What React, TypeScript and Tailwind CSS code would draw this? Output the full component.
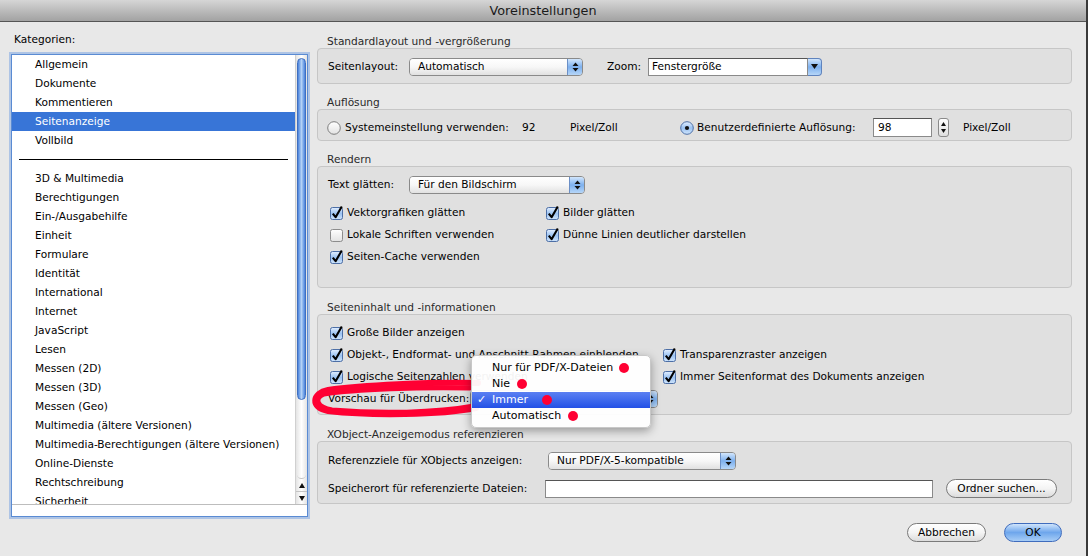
import React from 'react';

const TOP_ITEMS = ['Allgemein', 'Dokumente', 'Kommentieren', 'Seitenanzeige', 'Vollbild'];
const MORE_ITEMS = [
  '3D & Multimedia',
  'Berechtigungen',
  'Ein-/Ausgabehilfe',
  'Einheit',
  'Formulare',
  'Identität',
  'International',
  'Internet',
  'JavaScript',
  'Lesen',
  'Messen (2D)',
  'Messen (3D)',
  'Messen (Geo)',
  'Multimedia (ältere Versionen)',
  'Multimedia-Berechtigungen (ältere Versionen)',
  'Online-Dienste',
  'Rechtschreibung',
  'Sicherheit',
];

const MENU_ITEMS = ['Nur für PDF/X-Dateien', 'Nie', 'Immer', 'Automatisch'];

// shared gradients for the aqua controls
const Defs = () => (
  <svg width="0" height="0" className="absolute">
    <defs>
      <linearGradient id="cbOn" x1="0" y1="0" x2="0" y2="1">
        <stop offset="0" stopColor="#e3efff" />
        <stop offset="0.5" stopColor="#9cc3f2" />
        <stop offset="1" stopColor="#cfe4fb" />
      </linearGradient>
      <linearGradient id="cbOff" x1="0" y1="0" x2="0" y2="1">
        <stop offset="0" stopColor="#ffffff" />
        <stop offset="1" stopColor="#e2e2e2" />
      </linearGradient>
    </defs>
  </svg>
);

const PopupArrows = () => (
  <svg width="7" height="10" viewBox="0 0 7 10">
    <path d="M3.5 0.5 L6.5 4 H0.5Z M3.5 9.5 L6.5 6 H0.5Z" fill="#111" />
  </svg>
);

const Select = ({ value, className }: { value: string; className: string }) => (
  <div className={`flex h-[18px] items-stretch rounded-[4px] border border-[#8a8a8a] overflow-hidden ${className}`}>
    <div className="flex-1 flex items-center pl-[8px] bg-gradient-to-b from-white via-[#f7f7f7] to-[#e1e1e1] whitespace-nowrap overflow-hidden">
      {value}
    </div>
    <div className="w-[15px] flex items-center justify-center border-l border-[#6b8fc6] bg-gradient-to-b from-[#d2e6fc] via-[#7db0ee] to-[#b6d6f8]">
      <PopupArrows />
    </div>
  </div>
);

const Check = ({ on }: { on?: boolean }) => (
  <svg width="14" height="14" viewBox="0 0 14 14" className="shrink-0 overflow-visible">
    <rect
      x="0.5"
      y="1.5"
      width="12"
      height="12"
      rx="2"
      fill={on ? 'url(#cbOn)' : 'url(#cbOff)'}
      stroke={on ? '#4d6fa6' : '#8c8c8c'}
    />
    {on && <path d="M2.8 7.6 L5.6 11.2 L11.8 0.4" stroke="#000" strokeWidth="2.1" fill="none" strokeLinejoin="round" />}
  </svg>
);

const CheckItem = ({ on, label }: { on?: boolean; label: string }) => (
  <div className="flex items-center h-[22px] gap-[3px] whitespace-nowrap">
    <Check on={on} />
    <span>{label}</span>
  </div>
);

const Radio = ({ on }: { on?: boolean }) => (
  <svg width="14" height="14" viewBox="0 0 14 14" className="shrink-0">
    <circle cx="7" cy="7" r="6.3" fill={on ? 'url(#cbOn)' : 'url(#cbOff)'} stroke={on ? '#4d6fa6' : '#7e7e7e'} />
    {on && <circle cx="7" cy="7" r="2.1" fill="#111" />}
  </svg>
);

const Group = ({ title, className, children }: { title: string; className: string; children: React.ReactNode }) => (
  <div className={className}>
    <div className="h-[14px] leading-[14px] pl-[10px] text-[#2a2a2a]">{title}</div>
    {children}
  </div>
);

const Button = ({ label, primary, className }: { label: string; primary?: boolean; className: string }) => (
  <div
    className={`h-[19px] flex items-center justify-center rounded-full border ${
      primary
        ? 'border-[#3f6cbd] bg-gradient-to-b from-[#cfe4fb] via-[#6ea6ec] to-[#a7cdf6]'
        : 'border-[#7a7a7a] bg-gradient-to-b from-white via-[#f4f4f4] to-[#dcdcdc]'
    } ${className}`}
  >
    {label}
  </div>
);

export default function App() {
  return (
    <div className="relative w-[1088px] h-[556px] overflow-hidden bg-[#e8e8e8] text-[10.6px] text-black font-['DejaVu_Sans','Noto_Sans',sans-serif] border-r-2 border-[#3a3a3a] flex flex-col">
      <Defs />
      {/* title bar */}
      <div className="h-[22px] shrink-0 flex items-center justify-center bg-gradient-to-b from-[#d6d6d6] to-[#a2a2a2] border-b border-[#555] text-[12.8px] text-[#1a1a1a]">
        Voreinstellungen
      </div>

      <div className="flex flex-1 min-h-0">
        {/* categories */}
        <div className="w-[297px] ml-[11px] shrink-0 flex flex-col">
          <div className="mt-[11px] h-[13px] leading-[13px] pl-[3px]">Kategorien:</div>
          <div className="mt-[8px] h-[463px] border border-[#5a8bd3] shadow-[0_0_0_2px_rgba(125,165,225,0.55)] bg-white flex flex-col overflow-hidden">
            <div className="flex flex-1 min-h-0">
              <div className="flex-1 overflow-hidden">
                {TOP_ITEMS.map((item) => (
                  <div
                    key={item}
                    className={`h-[19px] leading-[19px] pl-[23px] whitespace-nowrap ${
                      item === 'Seitenanzeige' ? 'bg-[#3875d7] text-white' : ''
                    }`}
                  >
                    {item}
                  </div>
                ))}
                <div className="h-[19px] flex items-center">
                  <div className="ml-[7px] w-[269px] h-px bg-black" />
                </div>
                {MORE_ITEMS.map((item) => (
                  <div key={item} className="h-[19px] leading-[19px] pl-[23px] whitespace-nowrap">
                    {item}
                  </div>
                ))}
              </div>
              {/* scrollbar */}
              <div className="w-[12px] shrink-0 flex flex-col bg-gradient-to-r from-[#e4e4e4] via-white to-[#e4e4e4] border-l border-[#d0d0d0]">
                <div className="mt-[3px] mx-[1px] h-[342px] rounded-full border border-[#3f6fc0] bg-gradient-to-r from-[#4a82db] via-[#b4d2f6] to-[#4a82db]" />
                <div className="flex-1 mx-[1px] rounded-b-full border-b border-[#c4c4c4]" />
                <div className="h-[13px] flex items-center justify-center border-b border-[#c4c4c4]">
                  <svg width="6" height="5" viewBox="0 0 6 5"><path d="M3 0 L6 5 H0Z" fill="#111" /></svg>
                </div>
                <div className="h-[12px] flex items-center justify-center">
                  <svg width="6" height="5" viewBox="0 0 6 5"><path d="M3 5 L6 0 H0Z" fill="#111" /></svg>
                </div>
              </div>
            </div>
            <div className="h-[12px] shrink-0 border-t border-[#bdbdbd] bg-white" />
          </div>
        </div>

        {/* settings */}
        <div className="ml-[9px] w-[755px] flex flex-col">
          <Group title="Standardlayout und -vergrößerung" className="mt-[12px]">
            <div className="h-[36px] rounded-[4px] border border-[#c6c6c6] bg-[#e0e0e0] flex items-center pl-[10px] pt-[1px]">
              <span className="w-[81px]">Seitenlayout:</span>
              <Select value="Automatisch" className="w-[174px]" />
              <span className="ml-[24px] w-[41px]">Zoom:</span>
              <div className="flex h-[18px]">
                <div className="w-[160px] bg-white border border-[#8a8a8a] border-t-[#555] flex items-center pl-[3px]">Fenstergröße</div>
                <div className="w-[14px] rounded-r-[4px] border border-l-0 border-[#5f83bd] bg-gradient-to-b from-[#d2e6fc] via-[#7db0ee] to-[#b6d6f8] flex items-center justify-center">
                  <svg width="7" height="5" viewBox="0 0 7 5"><path d="M3.5 5 L7 0 H0Z" fill="#111" /></svg>
                </div>
              </div>
            </div>
          </Group>

          <Group title="Auflösung" className="mt-[11px]">
            <div className="h-[32px] rounded-[4px] border border-[#c6c6c6] bg-[#e0e0e0] flex items-center pl-[9px] pt-[5px]">
              <Radio />
              <span className="ml-[4px] w-[177px]">Systemeinstellung verwenden:</span>
              <span className="w-[48px]">92</span>
              <span className="w-[110px]">Pixel/Zoll</span>
              <Radio on />
              <span className="ml-[3px] w-[176px]">Benutzerdefinierte Auflösung:</span>
              <div className="w-[59px] h-[19px] bg-white border border-[#8a8a8a] border-t-[#555] flex items-center pl-[4px]">98</div>
              <div className="ml-[6px] w-[11px] h-[19px] rounded-[3px] border border-[#8a8a8a] bg-gradient-to-b from-white to-[#dedede] flex flex-col items-center justify-center gap-[3px]">
                <svg width="5" height="4" viewBox="0 0 5 4"><path d="M2.5 0 L5 4 H0Z" fill="#111" /></svg>
                <svg width="5" height="4" viewBox="0 0 5 4"><path d="M2.5 4 L5 0 H0Z" fill="#111" /></svg>
              </div>
              <span className="ml-[14px]">Pixel/Zoll</span>
            </div>
          </Group>

          <Group title="Rendern" className="mt-[11px]">
            <div className="h-[122px] rounded-[4px] border border-[#c6c6c6] bg-[#e0e0e0] pl-[10px] pt-[9px]">
              <div className="flex items-center h-[18px]">
                <span className="w-[81px]">Text glätten:</span>
                <Select value="Für den Bildschirm" className="w-[176px]" />
              </div>
              <div className="mt-[8px] ml-[2px] grid grid-cols-[216px_1fr]">
                <CheckItem on label="Vektorgrafiken glätten" />
                <CheckItem on label="Bilder glätten" />
                <CheckItem label="Lokale Schriften verwenden" />
                <CheckItem on label="Dünne Linien deutlicher darstellen" />
                <CheckItem on label="Seiten-Cache verwenden" />
              </div>
            </div>
          </Group>

          <Group title="Seiteninhalt und -informationen" className="mt-[12px]">
            <div className="h-[101px] rounded-[4px] border border-[#c6c6c6] bg-[#e0e0e0] pl-[12px] pt-[7px]">
              <div className="grid grid-cols-[333px_1fr]">
                <CheckItem on label="Große Bilder anzeigen" />
                <div />
                <CheckItem on label="Objekt-, Endformat- und Anschnitt-Rahmen einblenden" />
                <CheckItem on label="Transparenzraster anzeigen" />
                <CheckItem on label="Logische Seitenzahlen verwenden" />
                <CheckItem on label="Immer Seitenformat des Dokuments anzeigen" />
                <div className="flex items-center h-[22px] -ml-[2px]">
                  <span className="w-[142px] whitespace-nowrap">Vorschau für Überdrucken:</span>
                  <Select value="Immer" className="w-[188px]" />
                </div>
              </div>
            </div>
          </Group>

          <Group title="XObject-Anzeigemodus referenzieren" className="mt-[12px]">
            <div className="h-[63px] rounded-[4px] border border-[#c6c6c6] bg-[#e0e0e0] pl-[10px] pt-[9px] flex flex-col gap-[9px]">
              <div className="flex items-center h-[19px]">
                <span className="w-[220px]">Referenzziele für XObjects anzeigen:</span>
                <Select value="Nur PDF/X-5-kompatible" className="w-[188px]" />
              </div>
              <div className="flex items-center h-[19px]">
                <span className="w-[217px]">Speicherort für referenzierte Dateien:</span>
                <div className="w-[388px] h-[18px] bg-white border border-[#8a8a8a] border-t-[#555]" />
                <Button label="Ordner suchen..." className="ml-[13px] w-[111px]" />
              </div>
            </div>
          </Group>

          <div className="mt-[19px] flex justify-end pr-[10px] gap-[18px]">
            <Button label="Abbrechen" className="w-[79px]" />
            <Button label="OK" primary className="w-[58px]" />
          </div>
        </div>
      </div>

      {/* red annotation around the label */}
      <svg className="absolute left-0 top-0 pointer-events-none" width="1088" height="556">
        <path
          d="M478 383 C430 382 362 385 328 390 C312 393 310 408 328 411 C372 416 440 415 476 408"
          stroke="#ff0033"
          strokeWidth="6"
          fill="none"
          strokeLinecap="round"
        />
        <path
          d="M470 388 C420 387 356 389 324 394 C314 398 316 407 332 410 C380 414 436 413 474 406"
          stroke="#ff0033"
          strokeWidth="5"
          fill="none"
          strokeLinecap="round"
        />
      </svg>

      {/* open popup menu */}
      <div className="absolute left-[471px] top-[355px] w-[180px] h-[73px] rounded-[5px] bg-white/95 shadow-[0_3px_10px_rgba(0,0,0,0.35)] border border-[#c8c8c8] pt-[4px]">
        {MENU_ITEMS.map((item) => (
          <div
            key={item}
            className={`relative h-[16px] leading-[16px] pl-[20px] whitespace-nowrap text-[11px] ${
              item === 'Immer' ? 'bg-gradient-to-b from-[#5a7ff2] to-[#2350e6] text-white' : ''
            }`}
          >
            {item === 'Immer' && <span className="absolute left-[5px] top-0">✓</span>}
            {item}
          </div>
        ))}
      </div>

      {/* red dots */}
      <div className="absolute left-[619px] top-[363px] w-[10px] h-[10px] rounded-full bg-[#ff0033]" />
      <div className="absolute left-[517px] top-[379px] w-[10px] h-[10px] rounded-full bg-[#ff0033]" />
      <div className="absolute left-[542px] top-[395px] w-[10px] h-[10px] rounded-full bg-[#ff0033]" />
      <div className="absolute left-[568px] top-[411px] w-[10px] h-[10px] rounded-full bg-[#ff0033]" />
    </div>
  );
}
